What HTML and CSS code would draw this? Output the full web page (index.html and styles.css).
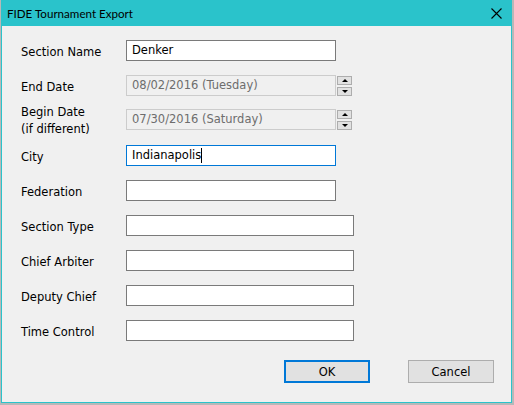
FILE: index.html
```html
<!DOCTYPE html>
<html>
<head>
<meta charset="utf-8">
<link rel="stylesheet" href="styles.css">
</head>
<body>
<div class="window">
  <div class="titlebar">
    <span class="title">FIDE Tournament Export</span>
    <svg class="close" width="11" height="11" viewBox="0 0 11 11"><path d="M0.5 0.5 L10.5 10.5 M10.5 0.5 L0.5 10.5" stroke="#000" stroke-width="1.1" fill="none"/></svg>
  </div>
  <div class="content">
    <div class="form">
      <div class="row"><span class="label">Section Name</span><div class="field narrow">Denker</div></div>
      <div class="row gap-date"><span class="label">End Date</span>
        <div class="datebox"><div class="field narrow disabled">08/02/2016 (Tuesday)</div>
          <div class="spin"><div class="spinbtn"><span class="up"></span></div><div class="spinbtn"><span class="down"></span></div></div></div>
      </div>
      <div class="row gap-small"><span class="label two">Begin Date<br>(if different)</span>
        <div class="datebox"><div class="field narrow disabled">07/30/2016 (Saturday)</div>
          <div class="spin"><div class="spinbtn"><span class="up"></span></div><div class="spinbtn"><span class="down"></span></div></div></div>
      </div>
      <div class="row gap-city"><span class="label">City</span><div class="field narrow focus">Indianapolis<span class="caret"></span></div></div>
      <div class="row"><span class="label">Federation</span><div class="field narrow"></div></div>
      <div class="row"><span class="label">Section Type</span><div class="field wide"></div></div>
      <div class="row"><span class="label">Chief Arbiter</span><div class="field wide"></div></div>
      <div class="row"><span class="label">Deputy Chief</span><div class="field wide"></div></div>
      <div class="row"><span class="label">Time Control</span><div class="field wide"></div></div>
    </div>
    <div class="buttons">
      <div class="btn default">OK</div>
      <div class="btn">Cancel</div>
    </div>
  </div>
</div>
</body>
</html>
```
FILE: styles.css
```css
html, body {
  margin: 0;
  padding: 0;
}
body {
  width: 514px;
  height: 405px;
  background: #b8b8b8;
  font-family: "DejaVu Sans", sans-serif;
  font-size: 11.5px;
  color: #000;
  overflow: hidden;
}
.window {
  box-sizing: border-box;
  margin-left: 1px;
  width: 511px;
  height: 403px;
  border: 1px solid #2ac3cb;
  border-top: none;
  background: #f0f0f0;
  display: flex;
  flex-direction: column;
}
.titlebar {
  height: 26px;
  background: #2ac3cb;
  display: flex;
  align-items: center;
  justify-content: space-between;
  padding: 0 9px 0 5px;
  flex: none;
}
.title {
  font-family: Lato, sans-serif;
  font-size: 11.6px;
  color: #000;
  padding-top: 1px;
}
.close {
  display: block;
}
.content {
  padding: 14px 17px 0 19px;
  display: flex;
  flex-direction: column;
}
.form {
  display: flex;
  flex-direction: column;
  gap: 14px;
}
.row {
  display: grid;
  grid-template-columns: 105px auto;
  height: 21px;
  align-items: center;
}
.row.gap-small {
  margin-top: -9px;
}
.row.gap-city {
  margin-top: 9px;
}
.label {
  line-height: 14px;
  white-space: nowrap;
  padding-top: 2px;
}
.label.two {
  align-self: start;
  padding-top: 3px;
  line-height: 17px;
}
.field {
  box-sizing: border-box;
  height: 21px;
  border: 1px solid #7a7a7a;
  background: #fff;
  padding-left: 5px;
  line-height: 19px;
  white-space: nowrap;
  display: flex;
  align-items: center;
}
.field.narrow {
  width: 210px;
}
.field.wide {
  width: 228px;
}
.field.disabled {
  background: #f0f0f0;
  border-color: #cccccc;
  color: #6d6d6d;
}
.field.focus {
  border-color: #0078d7;
}
.caret {
  display: inline-block;
  width: 1px;
  height: 15px;
  background: #000;
  margin-left: 0;
}
.datebox {
  display: flex;
  align-items: center;
  gap: 1px;
}
.spin {
  display: flex;
  flex-direction: column;
  gap: 2px;
}
.spinbtn {
  box-sizing: border-box;
  width: 15px;
  height: 9px;
  border: 1px solid #adadad;
  background: #e1e1e1;
  display: flex;
  align-items: center;
  justify-content: center;
}
.up {
  width: 0;
  height: 0;
  border-left: 3px solid transparent;
  border-right: 3px solid transparent;
  border-bottom: 3px solid #000;
}
.down {
  width: 0;
  height: 0;
  border-left: 3px solid transparent;
  border-right: 3px solid transparent;
  border-top: 3px solid #000;
}
.buttons {
  display: flex;
  justify-content: flex-end;
  gap: 38px;
  margin-top: 19px;
}
.btn {
  box-sizing: border-box;
  width: 86px;
  height: 23px;
  border: 1px solid #adadad;
  background: #e1e1e1;
  display: flex;
  align-items: center;
  justify-content: center;
}
.btn.default {
  border: 2px solid #0078d7;
}
```
